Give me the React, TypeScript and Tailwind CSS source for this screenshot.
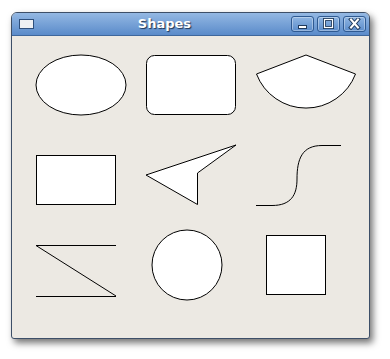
const stroke = { fill: 'white', stroke: 'black', strokeWidth: 1 };

// One drawing per cell, 110×90, coordinates local to the cell.
function Shape({ kind }: { kind: number }) {
  switch (kind) {
    case 0:
      return <ellipse cx={55} cy={40} rx={45} ry={30} {...stroke} />;
    case 1:
      return <rect x={10.5} y={10.5} width={89} height={59} rx={8} {...stroke} />;
    case 2:
      return <path d="M60,10 L10.5,29 A53,53 0 0 0 109.5,29 Z" {...stroke} strokeLinejoin="round" />;
    case 3:
      return <rect x={10.5} y={20.5} width={79} height={49} {...stroke} />;
    case 4:
      return <path d="M10,40 L100,10 L61.5,38 L61.5,69.5 Z" {...stroke} />;
    case 5:
      return (
        <path
          d="M10,70.5 H26 C45,70.5 51,60 51,44 C51,24 56,10.5 76,10.5 H95"
          fill="none"
          stroke="black"
          strokeWidth={1}
        />
      );
    case 6:
      return <path d="M10,20.5 H90 M10,20.5 L90,71 M10,71.5 H90" fill="none" stroke="black" strokeWidth={1} />;
    case 7:
      return <circle cx={51} cy={40} r={35} {...stroke} />;
    default:
      return <rect x={20.5} y={10.5} width={59} height={59} {...stroke} />;
  }
}

function TitleButton({ children }: { children: React.ReactNode }) {
  return (
    <div className="flex h-[16px] w-[23px] items-center justify-center rounded-[3px] border border-[#2f5a92] bg-gradient-to-b from-[#8fb5e2] to-[#5c8dcb] shadow-[inset_0_0_0_1px_rgba(255,255,255,0.35)]">
      <svg width={13} height={12} viewBox="0 0 13 12">
        {children}
      </svg>
    </div>
  );
}

export default function App() {
  return (
    <div className="h-[359px] w-[390px] bg-white pl-[11px] pt-[12px]">
      <div className="flex h-[327px] w-[359px] flex-col overflow-hidden rounded-t-[6px] rounded-b-[3px] border border-[#3d4f68] bg-[#ece9e3] shadow-[3px_4px_7px_rgba(0,0,0,0.55)]">
        <div className="relative flex h-[23px] shrink-0 items-center border-b border-[#3e679c] bg-gradient-to-b from-[#94b8e3] to-[#5a8bca] pl-[7px] pr-[3px]">
          <div className="h-[10px] w-[15px] border border-[#2e4f7c] bg-[#eef0f3]" />
          <div className="flex-1 pl-[4px] text-center font-['DejaVu_Sans',sans-serif] text-[13px] font-bold text-white [text-shadow:1px_1px_1px_#1e3454]">
            Shapes
          </div>
          <div className="flex gap-[3px]">
            <TitleButton>
              <rect x={2.5} y={7.5} width={8} height={3} fill="white" stroke="#203a5c" />
            </TitleButton>
            <TitleButton>
              <rect x={2.5} y={1.5} width={8} height={8} fill="none" stroke="#203a5c" strokeWidth={3} />
              <rect x={2.5} y={1.5} width={8} height={8} fill="none" stroke="white" strokeWidth={1.2} />
            </TitleButton>
            <TitleButton>
              <path d="M3,1.5 L10,9.5 M10,1.5 L3,9.5" stroke="#203a5c" strokeWidth={4} strokeLinecap="square" />
              <path d="M3,1.5 L10,9.5 M10,1.5 L3,9.5" stroke="white" strokeWidth={2} strokeLinecap="square" />
            </TitleButton>
          </div>
        </div>
        <div className="grid grid-cols-[repeat(3,110px)] grid-rows-[repeat(3,90px)] pl-[14px] pt-[9px]">
          {[0, 1, 2, 3, 4, 5, 6, 7, 8].map((k) => (
            <svg key={k} width={110} height={90} className="overflow-visible">
              <Shape kind={k} />
            </svg>
          ))}
        </div>
      </div>
    </div>
  );
}
